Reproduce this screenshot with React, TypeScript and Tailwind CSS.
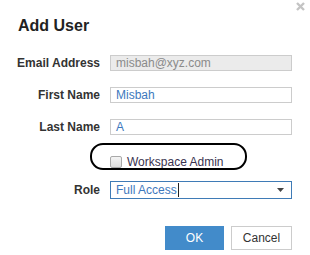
import React from 'react'

const font = { fontFamily: '"Liberation Sans", Arial, sans-serif' }

function Row({ label, children, className = '' }: { label: string; children: React.ReactNode; className?: string }) {
  return (
    <div className={`flex items-center ${className}`}>
      <label className="w-[110px] pr-[10px] text-right text-[12px] font-bold leading-[16px] text-[#333]">{label}</label>
      {children}
    </div>
  )
}

export default function App() {
  return (
    <div className="relative h-[255px] w-[310px] overflow-hidden bg-white" style={font}>
      {/* close */}
      <button className="absolute right-[5px] top-[2px] h-[9px] w-[9px]">
        <svg viewBox="0 0 9 9" width="9" height="9">
          <path d="M1 1 L8 8 M8 1 L1 8" stroke="#c4c4c4" strokeWidth="2.4" />
        </svg>
      </button>

      <h1 className="pl-[18px] pt-[16px] text-[16px] font-bold leading-[20px] text-[#222]">Add User</h1>

      <div className="mt-[19px] flex flex-col">
        <Row label="Email Address">
          <div className="h-[16px] w-[182px] border border-[#ccc] bg-[#ebebeb] pl-[5px] text-[12px] leading-[14px] text-[#8a8a8a]">
            misbah@xyz.com
          </div>
        </Row>
        <Row label="First Name" className="mt-[16px]">
          <div className="h-[16px] w-[182px] border border-[#ccc] bg-white pl-[5px] text-[12px] leading-[14px] text-[#3d78bd]">
            Misbah
          </div>
        </Row>
        <Row label="Last Name" className="mt-[16px]">
          <div className="h-[16px] w-[182px] border border-[#ccc] bg-white pl-[5px] text-[12px] leading-[14px] text-[#3d78bd]">
            A
          </div>
        </Row>

        <div className="mt-[20px] flex items-center pl-[110px]">
          <span className="h-[12px] w-[12px] rounded-[2px] border border-[#a9a9a9] bg-gradient-to-b from-[#f4f4f4] to-[#dedede]" />
          <span className="ml-[5px] text-[12px] leading-[14px] text-[#3a3350]">Workspace Admin</span>
        </div>

        <Row label="Role" className="mt-[12px]">
          <div className="flex h-[18px] w-[182px] items-center border border-[#3f7bb6] bg-white pl-[5px] text-[12px] leading-[16px] text-[#3d78bd]">
            <span>Full Access</span>
            <span className="ml-px h-[14px] w-px bg-[#222]" />
            <svg className="ml-auto mr-[7px]" width="7" height="4" viewBox="0 0 7 4">
              <path d="M0 0 H7 L3.5 4 Z" fill="#444" />
            </svg>
          </div>
        </Row>

        <div className="mt-[27px] flex justify-end gap-[7px] pr-[18px]">
          <button className="h-[24px] w-[59px] bg-[#428bca] text-[12px] text-white">OK</button>
          <button className="h-[24px] w-[61px] border border-[#ccc] bg-white text-[12px] text-[#333]">Cancel</button>
        </div>
      </div>

      {/* hand-drawn annotation around the checkbox */}
      <div className="pointer-events-none absolute left-[90px] top-[143px] h-[27px] w-[157px] rounded-[13px] border-[2.5px] border-black" />
    </div>
  )
}
